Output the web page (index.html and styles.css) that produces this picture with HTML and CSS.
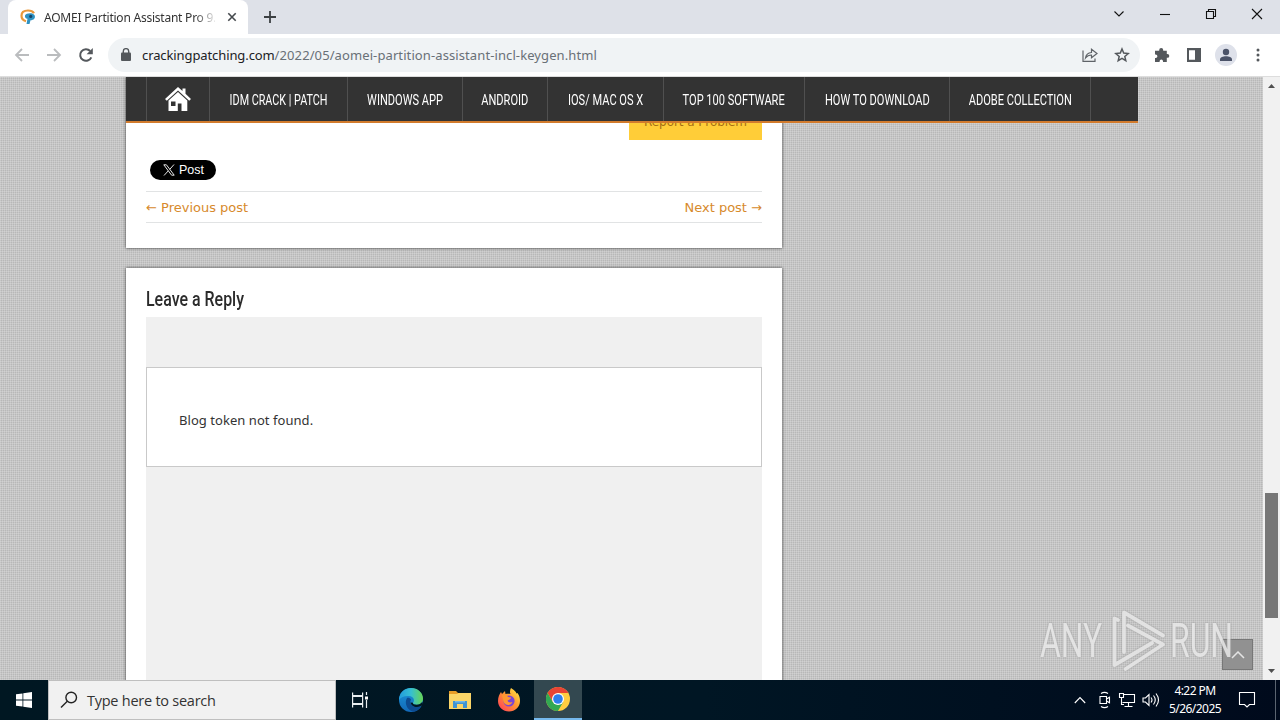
FILE: index.html
```
<!DOCTYPE html>
<html lang="en">
<head>
    <meta charset="UTF-8">
    <meta name="viewport" content="width=device-width, initial-scale=1.0">
    <title>AOMEI Partition Assistant Pro</title>
    <link rel="stylesheet" href="styles.css">
</head>
<body>
<div class="tab-strip">
    <div class="tab">
        <svg class="favicon" width="16" height="16" viewBox="0 0 16 16">
            <path d="M6 12.3C3 11.500 1.500 9.500 1.500 6.800 1.500 3.600 4 1.500 8 1.500c3 0 5 1 6 2.700" fill="none" stroke="#e8983a" stroke-width="2.200"/>
            <path d="M5 6.500C6 3.800 13 3.200 14.600 6.300c1.200 2.700-.8 5-4.100 5L9.500 15H6.500L7.500 9.800C5.800 10 4.600 8.200 5 6.500z" fill="#2f92c2"/>
            <circle cx="10.700" cy="7.400" r="1.600" fill="#174466"/>
        </svg>
        <span class="tab-title">AOMEI Partition Assistant Pro 9.8</span>
        <svg width="10" height="10" viewBox="0 0 10 10" stroke="#45494d" stroke-width="1.600"><path d="M1.300 1.300l7.400 7.400M8.700 1.300L1.300 8.700"/></svg>
    </div>
    <svg class="new-tab" width="12" height="12" viewBox="0 0 12 12" stroke="#3c4043" stroke-width="1.800"><path d="M6 0v12M0 6h12"/></svg>
    <div class="window-buttons">
        <svg width="12" height="12" viewBox="0 0 12 12"><path d="M1.500 3.500L6 8l4.500-4.500"/></svg>
        <svg width="12" height="12" viewBox="0 0 12 12"><path d="M1 6.500h10"/></svg>
        <svg width="12" height="12" viewBox="0 0 12 12"><path d="M1.500 3.500h7v7h-7zM3.500 3.500v-2h7v7h-2"/></svg>
        <svg width="12" height="12" viewBox="0 0 12 12"><path d="M1 1l10 10M11 1L1 11"/></svg>
    </div>
</div>

<div class="toolbar">
    <svg width="16" height="16" viewBox="0 0 16 16" fill="none" stroke="#babcbe" stroke-width="1.800"><path d="M15 8H2.500M8 2L2 8l6 6"/></svg>
    <svg width="16" height="16" viewBox="0 0 16 16" fill="none" stroke="#babcbe" stroke-width="1.800"><path d="M1 8h12.500M8 2l6 6-6 6"/></svg>
    <svg width="16" height="16" viewBox="0 0 16 16"><path d="M13.300 10.300A5.800 5.800 0 1 1 12.200 4" fill="none" stroke="#54585c" stroke-width="2"/><path d="M14.800 1v6.200H8.600z" fill="#54585c"/></svg>
    <div class="address">
        <svg width="10" height="14" viewBox="0 0 10 14"><rect x="0" y="4.500" width="10" height="8.500" rx="1" fill="#54585c"/><path d="M2.300 5V3.300a2.700 2.700 0 0 1 5.400 0V5" fill="none" stroke="#54585c" stroke-width="1.400"/></svg>
        <span class="url"><b>crackingpatching.com</b>/2022/05/aomei-partition-assistant-incl-keygen.html</span>
        <svg width="16" height="16" viewBox="0 0 16 16" fill="none" stroke="#5f6368" stroke-width="1.200"><path d="M1 3.500v10.900h12v-3M3.500 11c.5-3.600 2.900-5.300 6-5.500V2.200L15 6.600l-5.500 4.200V8C7 8 5 9 3.500 11z"/></svg>
        <svg width="16" height="16" viewBox="0 0 16 16" fill="none" stroke="#54585c" stroke-width="1.500"><path d="M8 2l1.700 4.100 4.500.4-3.400 2.900 1 4.300L8 11.400l-3.800 2.300 1-4.300-3.400-2.900 4.500-.4z"/></svg>
    </div>
    <div class="actions">
        <svg width="16" height="16" viewBox="0 0 16 16"><path d="M1 3.800h4.200V3a2 2 0 0 1 4 0v.8h3.600V7h.6a1.900 1.900 0 0 1 0 3.800h-.6V15H9v-.8a1.700 1.700 0 0 0-3.400 0v.8H1v-4h.7a1.700 1.700 0 0 0 0-3.400H1z" fill="#54585c"/></svg>
        <svg width="16" height="16" viewBox="0 0 16 16"><path d="M1 1h14v14H1zM3 3.300v9.400h6V3.300z" fill="#54585c" fill-rule="evenodd"/></svg>
        <svg width="22" height="22" viewBox="0 0 22 22"><circle cx="11" cy="11" r="11" fill="#dee1ea"/><circle cx="11" cy="8" r="3.200" fill="#4b5368"/><path d="M5 17v-1.500c0-2.200 3-3.300 6-3.300s6 1.100 6 3.300V17z" fill="#4b5368"/></svg>
        <svg width="4" height="16" viewBox="0 0 4 16" fill="#54585c"><circle cx="2" cy="3" r="1.500"/><circle cx="2" cy="8" r="1.500"/><circle cx="2" cy="13" r="1.500"/></svg>
    </div>
</div>

<div class="viewport">
    <div class="page">
        <nav class="menu">
            <a class="home"><svg width="26" height="24" viewBox="0 0 26 24" fill="#fff"><path d="M13 0l4.500 4V1.500h3v5.200L26 12l-1.800 1.700L13 3.400 1.800 13.700 0 12z"/><path d="M13 5l9.300 8.500V24h-5.800v-7.500h-3.700V24H3.500V13.500zM6 14.500V19h4.500v-4.500z" fill-rule="evenodd"/></svg></a>
            <a class="w-idm"><span>IDM CRACK | PATCH</span></a>
            <a class="w-windows"><span>WINDOWS APP</span></a>
            <a class="w-android"><span>ANDROID</span></a>
            <a class="w-ios"><span>IOS/ MAC OS X</span></a>
            <a class="w-top"><span>TOP 100 SOFTWARE</span></a>
            <a class="w-how"><span>HOW TO DOWNLOAD</span></a>
            <a class="w-adobe"><span>ADOBE COLLECTION</span></a>
        </nav>
        <article class="card post">
            <div class="report">Report a Problem</div>
            <div class="x-post">
                <svg width="12" height="12" viewBox="0 0 12 12" fill="none" stroke="#fff"><path d="M.8.800h2.600l7.800 10.400H8.600zM11 .5L6.800 5.300M5.200 6.900L1 11.500" stroke-width=".9"/></svg>
                <span>Post</span>
            </div>
            <div class="post-nav"><a>← Previous post</a><a>Next post →</a></div>
        </article>
        <section class="card reply">
            <h3>Leave a Reply</h3>
            <div class="comments">
                <div class="message">Blog token not found.</div>
            </div>
        </section>
        <div class="to-top"><svg width="14" height="8" viewBox="0 0 14 8" fill="none" stroke="#e4e4e4" stroke-width="1.500"><path d="M1 7l6-6 6 6"/></svg></div>
        <div class="watermark">
            <span>ANY</span>
            <svg width="56" height="62" viewBox="0 0 56 62" fill="none" stroke="#e7e7e7" stroke-width="3.800" stroke-linejoin="round" stroke-linecap="round"><path d="M12 42V2.500L51 25.500M16 15.500L51 34.500 13.500 59M6 10l-3.500-1.500v46.500L40 33"/></svg>
            <span>RUN</span>
        </div>
    </div>
    <div class="scrollbar">
        <svg width="7" height="4" viewBox="0 0 7 4"><path d="M0 4l3.500-4L7 4z" fill="#505050"/></svg>
        <div class="thumb"></div>
        <svg width="7" height="4" viewBox="0 0 7 4"><path d="M0 0l3.500 4L7 0z" fill="#505050"/></svg>
    </div>
</div>

<div class="taskbar">
    <div class="start"><svg width="16" height="16" viewBox="0 0 16 16" fill="#fff"><path d="M0 2.300L6.500 1.400v6.200H0zM7.300 1.300L16 0v7.600H7.300zM0 8.400h6.500v6.200L0 13.700zM7.300 8.400H16V16l-8.700-1.300z"/></svg></div>
    <div class="search">
        <svg width="18" height="18" viewBox="0 0 18 18" fill="none" stroke="#222" stroke-width="1.400"><circle cx="11.200" cy="6.500" r="5.300"/><path d="M7.300 10.300L1 16.500"/></svg>
        <span>Type here to search</span>
    </div>
    <div class="app"><svg width="18" height="18" viewBox="0 0 18 18" fill="none" stroke="#e8edf0" stroke-width="1.200"><path d="M1.600 1.500v3h10v-3M1.600 5.500v7h10v-7zM1.600 16.500v-3h10v3M15.500 1v3M15.500 9v8"/><path d="M14 5.500h3v3h-3z" fill="#fff" stroke="none"/></svg></div>
    <div class="app">
        <svg width="24" height="24" viewBox="0 0 24 24">
            <defs>
                <linearGradient id="edge" x1="0" x2="1"><stop offset="0" stop-color="#229bdc"/><stop offset=".5" stop-color="#36bfd2"/><stop offset="1" stop-color="#68d553"/></linearGradient>
                <linearGradient id="edge-low" x1="0" y1="0" x2="0" y2="1"><stop offset="0" stop-color="#1c96d9"/><stop offset="1" stop-color="#1268b8"/></linearGradient>
            </defs>
            <circle cx="12" cy="12" r="12" fill="url(#edge-low)"/>
            <path d="M0 10.500C1 4 6 0 12 0c7 0 12 5 12 10.500 0 4-3 6.300-6.500 6.300-2.300 0-4-1-3.500-2 2-2 1-6.300-4-6.800-4-.4-8 .7-10 4z" fill="url(#edge)"/>
            <path d="M8 10c-3 5 0 12 6 13.500 4 0 7-2.500 8-5.500-6 3-13-1-10-6.500-1-1.800-3-2.300-4-1.500z" fill="#0d4b91"/>
            <path d="M14 14.800c-.5 1 1.200 2 3.500 2 2.500 0 4.700-1.200 5.800-3L24 17l-2 1c-5 2.500-10 0-10.500-3.500z" fill="#011722"/>
        </svg>
    </div>
    <div class="app">
        <svg width="22" height="20" viewBox="0 0 22 20"><path d="M0 1h7l2 2h12v4H0z" fill="#e79d28"/><path d="M0 4h8l1.500-1H22v16H0z" fill="#fad568"/><path d="M4 18v-7h14v7h-4v-4H8v4z" fill="#3f94d3"/><path d="M6 11h10v1.500H6z" fill="#72b9e8"/></svg>
    </div>
    <div class="app">
        <svg width="24" height="24" viewBox="0 0 24 24">
            <defs><linearGradient id="fox" x1="1" y1="0" x2="0" y2="1"><stop offset="0" stop-color="#fff34a"/><stop offset=".45" stop-color="#ff9831"/><stop offset="1" stop-color="#ff365d"/></linearGradient></defs>
            <path d="M14 0c4 2.500 5 4 5.500 5.500L20.500 5c2 3 2.500 5 2.500 8 0 6-5 10.500-11 10.500S1 19 1 13c0-4 1.500-7 3-9l1 2 3-3 .5 3c2-.5 3.300-.5 5 0C12.500 4 13 2 14 0z" fill="url(#fox)"/>
            <circle cx="12" cy="13" r="5.600" fill="#7945d6"/><path d="M5 7c3-1 5 0 6 2l3 .5c0 2-2.500 2-3.500 3 .5 2 3 2.500 5 1.500-1.500 4-7 4-9 0z" fill="#ff9831"/>
        </svg>
    </div>
    <div class="app active">
        <svg width="24" height="24" viewBox="0 0 24 24"><circle cx="12" cy="12" r="12" fill="#ffcd40"/><path d="M1.600 6A12 12 0 0 1 22.400 6H12L6.800 15z" fill="#e94435"/><path d="M1.600 6A12 12 0 0 0 12 24l5.200-9H6.800z" fill="#32a852"/><circle cx="12" cy="12" r="6" fill="#fff"/><circle cx="12" cy="12" r="4.800" fill="#2f7eed"/></svg>
    </div>
    <div class="tray">
        <svg width="12" height="8" viewBox="0 0 12 8"><path d="M.8 7L6 1.500 11.200 7"/></svg>
        <svg width="14" height="18" viewBox="0 0 14 18"><path d="M2 5.500h6.500v7H2zM8.500 8l3-1.800v5.600l-3-1.800M3 2.500q3.500-2.300 7 0M3 15.500q3.500 2.300 7 0"/></svg>
        <svg width="18" height="16" viewBox="0 0 18 16"><path d="M5 2.500h11.500v8H4.500M10.500 10.500v4M6.500 14.500h8M1.500 1.500h4v4h-4zM3.500 5.500v7h2.500"/></svg>
        <svg width="18" height="16" viewBox="0 0 18 16"><path d="M1 6h2.500L7 2.500v11L3.500 10H1zM9 5.500q2 2.500 0 5M11.500 3.500q3.500 4.500 0 9M14 1.500q5 6.500 0 13"/></svg>
        <div class="clock"><span>4:22 PM</span><span>5/26/2025</span></div>
        <svg class="notice" width="18" height="18" viewBox="0 0 18 18"><path d="M1.500 1.500h15v12h-5L9 16l-2.500-2.500h-5z"/></svg>
    </div>
</div>
</body>
</html>
```
FILE: styles.css
```
* {
    box-sizing: border-box;
}

body {
    width: 1280px;
    height: 720px;
    margin: 0;
    overflow: hidden;
    display: flex;
    flex-direction: column;
    font-family: "Noto Sans", sans-serif;
    font-size: 13px;
    color: #333;
}

svg {
    display: block;
    flex: none;
}

.tab-strip {
    height: 34px;
    display: flex;
    background-color: #dee1e8;
    padding-left: 8px;
}

.tab {
    width: 240px;
    display: flex;
    align-items: center;
    padding: 0 11px 0 12px;
    background-color: #fff;
    border-radius: 8px 8px 0 0;
}

.tab-title {
    width: 171px;
    margin: 0 12px 0 8px;
    overflow: hidden;
    white-space: nowrap;
    font-size: 12px;
    letter-spacing: -0.230px;
    -webkit-mask-image: linear-gradient(90deg, #000 150px, transparent 174px);
    mask-image: linear-gradient(90deg, #000 150px, transparent 174px);
}

.new-tab {
    margin: 11px 0 0 16px;
}

.window-buttons {
    display: flex;
    gap: 34px;
    margin: 8px 17px 0 auto;
    fill: none;
    stroke: #111;
    stroke-width: 1.100;
}

.toolbar {
    height: 43px;
    display: flex;
    align-items: center;
    gap: 16px;
    padding-left: 14px;
    background-color: #fff;
    border-bottom: 1px solid #ddd;
}

.address {
    width: 1032px;
    height: 34px;
    display: flex;
    align-items: center;
    margin-left: -2px;
    padding: 0 10px 0 13px;
    gap: 16px;
    border-radius: 17px;
    background-color: #f0f3f5;
}

.url {
    flex: 1;
    margin-left: -5px;
    white-space: nowrap;
    letter-spacing: 0.100px;
    color: #697077;
}

.url b {
    font-weight: 400;
    letter-spacing: -0.100px;
    color: #202124;
}

.actions {
    display: flex;
    align-items: center;
    gap: 16px;
    margin-left: -2px;
}

.actions svg:nth-child(3) {
    margin: 0 3px 0 -3px;
}

.viewport {
    height: 603px;
    display: flex;
}

.page {
    position: relative;
    width: 1263px;
    overflow: hidden;
    padding-left: 126px;
    background-color: #b8b8b8;
    background-image:
        repeating-linear-gradient(0deg, rgba(255, 255, 255, 0.200) 0 1px, transparent 1px 2px),
        repeating-linear-gradient(90deg, rgba(255, 255, 255, 0.200) 0 1px, transparent 1px 2px);
}

/* Sticky site menu, sits over the scrolled article */
.menu {
    position: absolute;
    top: 0;
    left: 126px;
    width: 1012px;
    height: 46px;
    display: flex;
    padding-left: 20px;
    background-color: #333;
    border-bottom: 2px solid #d27b2d;
    font-family: Roboto, sans-serif;
    font-size: 14px;
    color: #fff;
}

.menu a {
    display: flex;
    align-items: center;
    justify-content: center;
    border-left: 1px solid #505050;
}

.menu a:last-child {
    border-right: 1px solid #505050;
}

.menu span {
    margin-top: 1px;
    white-space: nowrap;
    transform: scaleX(0.790);
}

.home {
    width: 63px;
}

.menu .w-idm span {
    transform: scaleX(0.770);
}

.w-idm {
    width: 138px;
}

.w-windows {
    width: 115px;
}

.w-android {
    width: 85px;
}

.w-ios {
    width: 116px;
}

.w-top {
    width: 141px;
}

.w-how {
    width: 145px;
}

.w-adobe {
    width: 142px;
}

.card {
    width: 656px;
    padding: 0 20px;
    background-color: #fff;
    box-shadow: 0 0 3px rgba(0, 0, 0, 0.700);
}

.post {
    height: 171px;
    display: flex;
    flex-direction: column;
    margin-bottom: 20px;
    font-family: "DejaVu Sans", sans-serif;
}

.report {
    align-self: flex-end;
    width: 133px;
    height: 63px;
    padding-top: 36px;
    text-align: center;
    line-height: 18px;
    background-color: #ffcd38;
    color: #a57013;
    font-size: 12px;
    letter-spacing: -0.050px;
    white-space: nowrap;
}

.x-post {
    width: 66px;
    height: 20px;
    display: flex;
    align-items: center;
    gap: 4px;
    margin: 20px 0 11px 4px;
    padding-left: 13px;
    border-radius: 10px;
    background-color: #000;
    color: #fff;
    font-family: "Liberation Sans", sans-serif;
    font-size: 12.500px;
    line-height: 18px;
}

.x-post span {
    margin-top: -1px;
}

.post-nav {
    height: 32px;
    display: flex;
    align-items: center;
    justify-content: space-between;
    border-top: 1px solid #e1e3e4;
    border-bottom: 1px solid #e1e3e4;
    color: #d78a2c;
}

.reply {
    height: 430px;
}

.reply h3 {
    width: max-content;
    height: 49px;
    margin: 0;
    padding-top: 16px;
    font: 500 20px/30px Roboto, sans-serif;
    color: #2b2b2b;
    transform: scaleX(0.798);
    transform-origin: left;
}

.comments {
    height: 381px;
    padding-top: 50px;
    background-color: #f0f0f0;
}

.message {
    height: 100px;
    padding: 42px 32px;
    border: 1px solid #c9c9c9;
    background-color: #fff;
    line-height: 20px;
    letter-spacing: 0.050px;
}

.to-top {
    position: absolute;
    left: 1222px;
    top: 562px;
    width: 31px;
    height: 31px;
    display: flex;
    align-items: center;
    justify-content: center;
    border: 1px solid #777;
    background-color: #919191;
}

.watermark {
    position: absolute;
    left: 1040px;
    top: 533px;
    width: 192px;
    display: flex;
    align-items: center;
    justify-content: space-between;
    font-family: Roboto, sans-serif;
    font-weight: 400;
    font-size: 49px;
    line-height: 62px;
    color: #e9e9e9;
    opacity: 0.850;
    filter: drop-shadow(0 0 1px #999);
}

.watermark span {
    width: 62px;
    transform: scaleX(0.650);
    transform-origin: left;
}

.watermark svg {
    margin-left: 7px;
}

.scrollbar {
    width: 17px;
    display: flex;
    flex-direction: column;
    align-items: center;
    padding: 7px 0;
    background-color: #f1f1f1;
}

.thumb {
    width: 13px;
    height: 125px;
    margin: 405px 0 auto;
    background-color: #777;
}

.taskbar {
    height: 40px;
    display: flex;
    background: linear-gradient(90deg, #001722, #001624 55%, #000a1c);
}

.start {
    width: 48px;
    display: grid;
    place-items: center;
}

.search {
    width: 288px;
    display: flex;
    align-items: center;
    gap: 9px;
    padding-left: 11px;
    border: 1px solid #bfbfbf;
    background-color: #f1f1f1;
    font-family: "Open Sans", sans-serif;
    font-size: 14.500px;
    letter-spacing: -0.250px;
}

.app {
    width: 48px;
    display: grid;
    place-items: center;
    margin-right: 1px;
}

.app:nth-child(3) {
    margin-right: 3px;
}

.active {
    background-color: #334850;
    border-bottom: 2px solid #76b9ed;
}

.tray {
    display: flex;
    align-items: center;
    gap: 9px;
    margin-left: auto;
    padding-right: 3px;
    border-right: 1px solid #5b6470;
    margin-right: 4px;
    padding-right: 19px;
    fill: none;
    stroke: #fff;
    stroke-width: 1.100;
}

.tray svg:nth-child(2) {
    margin: 0 -3px 0 3px;
}

.tray svg:nth-child(4) {
    margin-left: -3px;
}

.clock {
    width: 52px;
    display: flex;
    flex-direction: column;
    align-items: center;
    white-space: nowrap;
    color: #fff;
    font-size: 12px;
    line-height: 18px;
    letter-spacing: -0.550px;
    stroke: none;
}

.notice {
    margin-left: 8px;
}
```
